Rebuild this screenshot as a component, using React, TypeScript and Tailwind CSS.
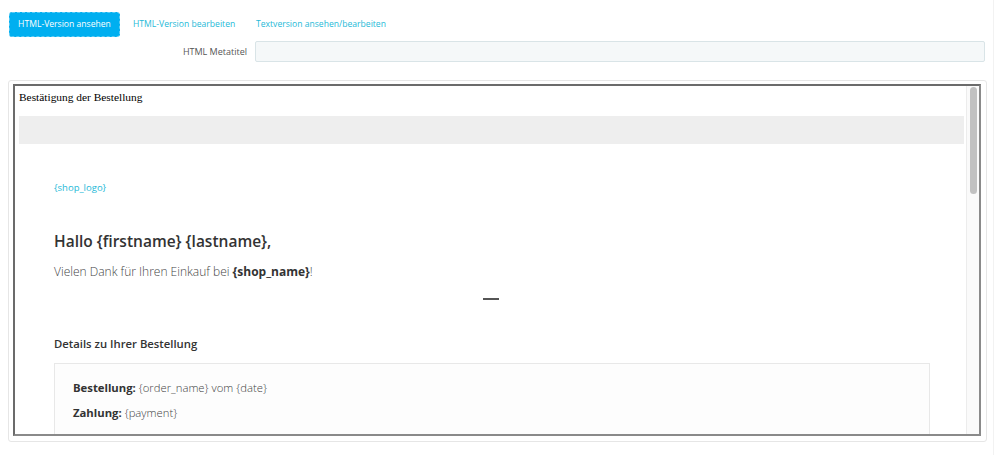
import React from "react";

export default function App() {
  return (
    <div className="w-[1000px] h-[455px] bg-white relative overflow-hidden" style={{ fontFamily: '"Open Sans", "Noto Sans", sans-serif' }}>
      <div className="absolute top-0 bottom-0 left-[993px] w-px bg-[#f2f2f2]" />
      <div className="pt-[12px] pl-[9px] flex items-center h-[37px]">
        <button className="h-[25px] w-[111px] shrink-0 rounded-[3px] bg-[#00aff0] text-white text-[8.6px] border border-dashed border-[#5cccf5] leading-none whitespace-nowrap">
          HTML-Version ansehen
        </button>
        <span className="ml-[13px] w-[123px] text-[8.6px] text-[#25b9d7] whitespace-nowrap">HTML-Version bearbeiten</span>
        <span className="text-[8.6px] text-[#25b9d7] whitespace-nowrap">Textversion ansehen/bearbeiten</span>
      </div>
      <div className="flex items-center mt-[4px] h-[21px]">
        <div className="w-[247px] text-right text-[9px] text-[#555]">HTML Metatitel</div>
        <div className="ml-[8px] w-[730px] h-[21px] bg-[#f5f8f9] border border-[#d9e4e7] rounded-[2px]" />
      </div>
      <div className="mt-[18px] ml-[8px] w-[979px] h-[362px] border border-[#e6e6e6] rounded-[3px] p-[3px] pl-[4px]">
        <div className="w-[968px] h-[352px] border-2 border-t-[#6b6b6b] border-l-[#6b6b6b] border-r-[#8a8a8a] border-b-[#8a8a8a] flex overflow-hidden">
          <div className="flex-1 overflow-hidden">
            <div className="pl-[4px] pt-[4px] text-[11.4px] text-black leading-[14px]" style={{ fontFamily: '"Liberation Serif", "Times New Roman", serif' }}>
              Bestätigung der Bestellung
            </div>
            <div className="ml-[4px] mt-[12px] w-[945px] h-[28px] bg-[#eeeeee]" />
            <div className="pl-[39px] text-[#555]">
              <div className="mt-[37px] text-[9.5px] text-[#25b9d7] leading-[14px]">{"{shop_logo}"}</div>
              <div className="mt-[35px] text-[15.5px] font-semibold text-[#333] leading-[22px]">Hallo {"{firstname}"} {"{lastname}"},</div>
              <div className="mt-[12px] text-[12px] font-light text-[#444] leading-[16px]">
                Vielen Dank für Ihren Einkauf bei <span className="font-bold text-[#333]">{"{shop_name}"}</span>!
              </div>
              <div className="mt-[18px] ml-[429px] w-[16px] h-[2px] bg-[#555]" />
              <div className="mt-[36px] text-[11.3px] font-semibold text-[#333] leading-[16px]">Details zu Ihrer Bestellung</div>
              <div className="mt-[11px] w-[876px] h-[100px] border border-[#e8e8e8] bg-[#fdfdfd] pl-[18px] pt-[16px] text-[11.3px] font-light text-[#444]">
                <div className="leading-[16px]"><span className="font-bold text-[#333]">Bestellung:</span> {"{order_name}"} vom {"{date}"}</div>
                <div className="mt-[9px] leading-[16px]"><span className="font-bold text-[#333]">Zahlung:</span> {"{payment}"}</div>
              </div>
            </div>
          </div>
          <div className="w-[13px] h-full bg-[#fafafa] border-l border-[#ececec] flex justify-center pt-[1px]">
            <div className="w-[7px] h-[107px] rounded-full bg-[#c1c1c1]" />
          </div>
        </div>
      </div>
    </div>
  );
}
